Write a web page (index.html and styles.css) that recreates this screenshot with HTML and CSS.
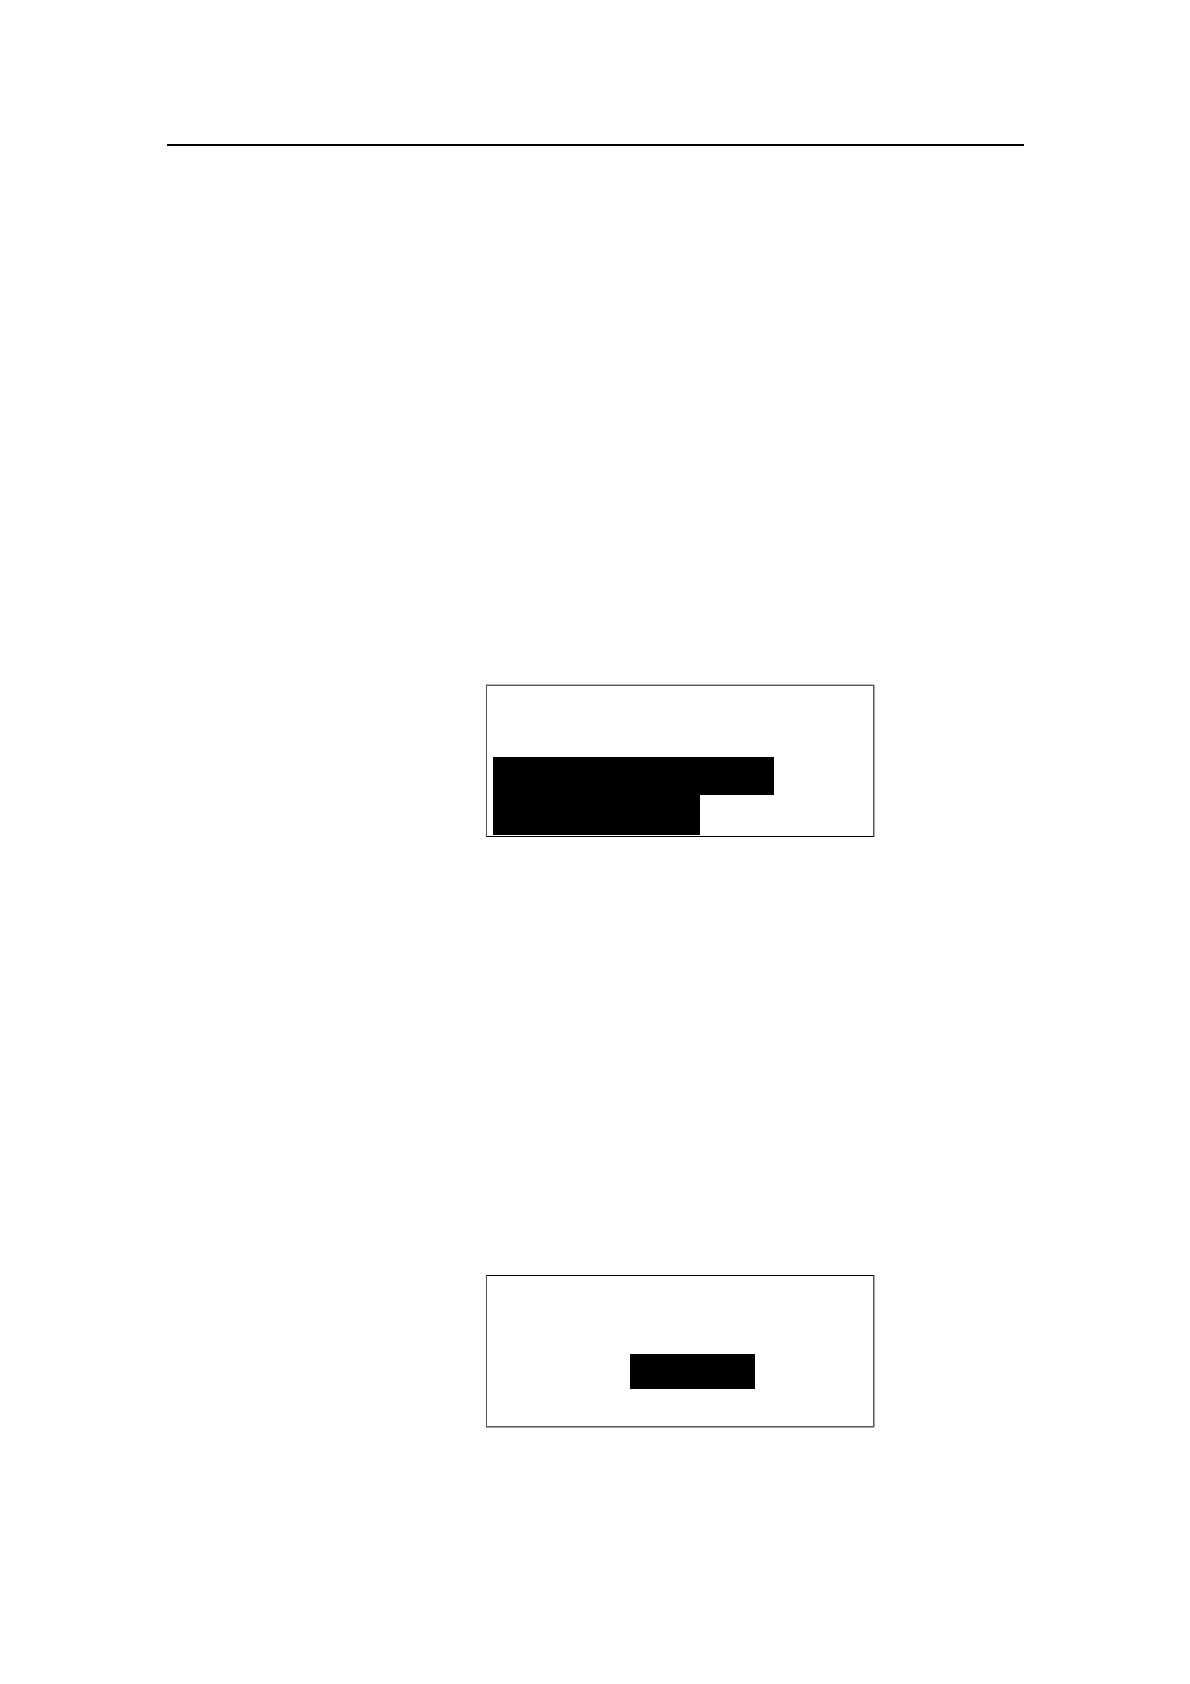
FILE: index.html
```html
<!DOCTYPE html>
<html lang="en">
<head>
  <meta charset="UTF-8" />
  <meta name="viewport" content="width=device-width, initial-scale=1.0"/>
  <title>Document page</title>
  <link rel="stylesheet" href="styles.css">
</head>
<body>
  <hr class="header-rule">

  <main class="content">
    <div class="screen screen-list">
      <div class="bar bar-long"></div>
      <div class="bar bar-short"></div>
    </div>

    <div class="screen screen-prompt">
      <div class="bar bar-button"></div>
    </div>
  </main>
</body>
</html>
```

FILE: styles.css
```css
body {
  margin: 0;
  padding: 144px 166px 256px 167px;
  background-color: #fff;
  font-family: "Liberation Sans", Arial, sans-serif;
}

.header-rule {
  height: 2px;
  margin: 0;
  border: none;
  background-color: #000;
}

.content {
  display: flex;
  flex-direction: column;
  gap: 438px;
  margin: 539px 150px 0 319px;
}

/* framed display panels */
.screen {
  display: flex;
  flex-direction: column;
  border: 1px solid #555;
  border-bottom-color: #000;
  box-shadow: 1px 0 0 #aaa;
}

.screen-list {
  padding: 71px 6px 1px;
  box-shadow: 1px 0 0 #aaa, 0 -1px 0 #bbb;
}

.screen-prompt {
  align-items: center;
  padding: 78px 0 37px 24px;
  border-top-color: #000;
  border-bottom-color: #555;
  box-shadow: 1px 0 0 #aaa, 0 1px 0 #aaa;
}

.bar {
  background-color: #000;
}

.bar-long {
  width: 281px;
  height: 38px;
}

.bar-short {
  width: 207px;
  height: 40px;
}

.bar-button {
  width: 125px;
  height: 35px;
}
```
